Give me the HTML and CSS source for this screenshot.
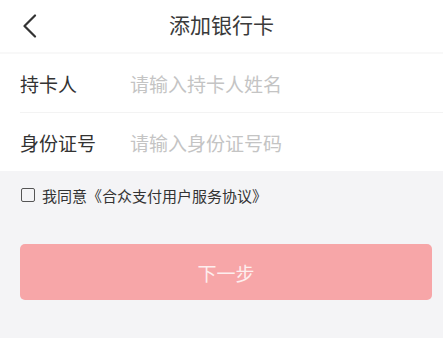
FILE: index.html
```html
<!DOCTYPE html>
<html lang="zh-CN">
<head>
    <meta charset="UTF-8">
    <meta name="viewport" content="width=device-width, initial-scale=1.0">
    <title>添加银行卡</title>
    <link rel="stylesheet" href="styles.css">
</head>
<body>
    <div class="page">
        <div class="header">
            <span class="back">
                <svg width="16" height="24" viewBox="0 0 16 24">
                    <path d="M13 1.5 L2.5 12 L13 22.5" fill="none" stroke="#333" stroke-width="2.2" stroke-linecap="round" stroke-linejoin="round"/>
                </svg>
            </span>
            <h1 class="title">添加银行卡</h1>
        </div>

        <div class="form">
            <div class="row">
                <span class="label">持卡人</span>
                <span class="placeholder">请输入持卡人姓名</span>
            </div>
            <div class="row">
                <span class="label">身份证号</span>
                <span class="placeholder">请输入身份证号码</span>
            </div>
        </div>

        <div class="agree">
            <span class="checkbox"></span>
            <span>我同意《合众支付用户服务协议》</span>
        </div>

        <button class="next">下一步</button>
    </div>
</body>
</html>
```

FILE: styles.css
```css
body {
    margin: 0;
    font-family: "Noto Sans CJK SC", "Noto Sans", sans-serif;
    background: #f4f4f6;
    color: #333;
}
.page {
    width: 443px;
    height: 338px;
    overflow: hidden;
}
.header {
    position: relative;
    height: 52px;
    background: #fff;
    border-bottom: 2px solid #f8f8f8;
    display: flex;
    align-items: center;
    justify-content: center;
}
.back {
    position: absolute;
    left: 22px;
    top: 14px;
    display: flex;
}
.title {
    margin: 0 0 4px;
    font-size: 21px;
    font-weight: normal;
    color: #3a3a3a;
}
.form {
    background: #fff;
    padding-left: 20px;
}
.row {
    height: 58px;
    display: flex;
    align-items: center;
    font-size: 19px;
}
.row + .row {
    border-top: 1px solid #f3f3f3;
}
.label {
    width: 110px;
    color: #333;
}
.placeholder {
    color: #c4c4c4;
}
.agree {
    display: flex;
    align-items: center;
    padding: 14px 21px 0;
    height: 20px;
    font-size: 15px;
    color: #333;
}
.checkbox {
    width: 12px;
    height: 12px;
    border: 1.5px solid #555;
    border-radius: 2px;
    margin-right: 7px;
}
.next {
    display: block;
    margin: 39px 11px 0 20px;
    width: 412px;
    height: 56px;
    border: none;
    border-radius: 5px;
    background: #f7a6a8;
    color: #fdeeee;
    font-family: inherit;
    font-size: 19px;
}
```
